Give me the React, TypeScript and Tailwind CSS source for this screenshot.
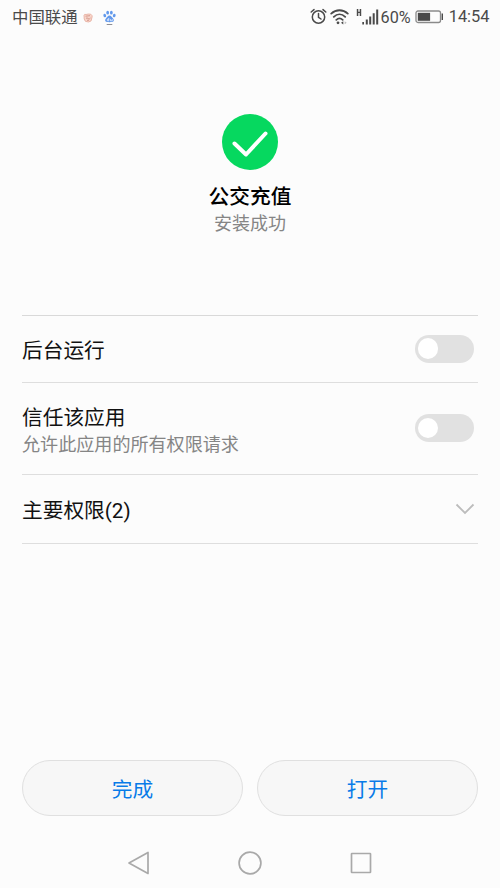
import React from 'react';

function AlarmIcon() {
  return (
    <svg width="17" height="17" viewBox="0 0 17 17" fill="none" stroke="#4a4a4a" strokeWidth="1.5" strokeLinecap="round">
      <circle cx="8.5" cy="9" r="6.2" />
      <path d="M8.5 5.5V9.3L11 11M1.2 4L4 1.6M15.8 4L13 1.6" />
    </svg>
  );
}

function WifiIcon() {
  return (
    <svg width="19" height="16" viewBox="0 0 19 16" fill="none" stroke="#4a4a4a" strokeWidth="1.8" strokeLinecap="round">
      <path d="M1.2 4.6C6 .1 13 .1 17.8 4.6M3.8 7.8C7.2 4.6 11.8 4.6 15.2 7.8M6.3 10.8C8.2 9.1 10.8 9.1 12.7 10.8" />
      <circle cx="8" cy="13.8" r="1.4" fill="#4a4a4a" stroke="none" />
      <path d="M11 13.8l2.300-1.600v3.200z" fill="#4a4a4a" stroke="none" />
      <path d="M16.700 13.800l-2-1.500v3z" fill="#bdbdbd" stroke="none" />
    </svg>
  );
}

function SignalIcon() {
  return (
    <svg width="23" height="16" viewBox="0 0 23 16" fill="#4a4a4a">
      <path d="M.8 0h1.500v2.800h1.400V0h1.500v7H3.700V4.100H2.300V7H.8z" />
      <path d="M6.300 13h1.700v2.500H6.300zM9.800 10.500h2v5h-2zM13.200 7.500h2v8h-2zM16.700 4.200h2v11.300h-2zM20.200 .5h2v15h-2z" />
    </svg>
  );
}

function BatteryIcon() {
  return (
    <svg width="29" height="14" viewBox="0 0 29 14" fill="none">
      <rect x="1" y="1" width="24.500" height="11.500" rx="2" stroke="#8a8a8a" strokeWidth="1.300" />
      <rect x="2.800" y="2.800" width="12.300" height="8" fill="#4a4a4a" />
      <path d="M27.300 3.500v6.500" stroke="#4a4a4a" strokeWidth="1.400" />
    </svg>
  );
}

function NoticeIcon() {
  return (
    <svg width="10" height="10" viewBox="0 0 10 10" fill="none">
      <path d="M1 2.200Q1.500 .8 3 1.500L5.500 1Q8.500 .8 9 2.500Q9.500 4 8.800 5Q9 8.800 5.500 9Q1.500 9.200 1.200 6Z" fill="#f8d5ca" stroke="#e5ab9c" strokeWidth=".8" />
      <path d="M2.500 3.200L7 2.700M3 5.500Q4 4 5 5.500T7.500 5M4 7.300h2" stroke="#cc8c7e" strokeWidth=".8" />
    </svg>
  );
}

function PawIcon() {
  return (
    <svg width="13" height="16" viewBox="0 0 14 16" fill="#6299ec">
      <ellipse cx="1.900" cy="5.300" rx="1.500" ry="2" transform="rotate(-12 1.900 5.300)" />
      <ellipse cx="5" cy="2.300" rx="1.500" ry="2" />
      <ellipse cx="9" cy="2.300" rx="1.500" ry="2" />
      <ellipse cx="12.100" cy="5.300" rx="1.500" ry="2" transform="rotate(12 12.100 5.300)" />
      <path d="M7 5.300C9 5.300 9.200 7 10.700 8.300C12.300 9.800 12 12.300 9.800 12.400C8 12.500 6 12.500 4.200 12.400C2 12.300 1.700 9.800 3.300 8.300C4.800 7 5 5.300 7 5.300Z" />
      <path d="M6.200 8v3H4.900Q4 10.200 4.900 9.300H6.200M8 9.200v1.800h2V9.200" fill="none" stroke="#f5f8ff" strokeWidth=".8" />
      <path d="M4 15h6" stroke="#85858c" strokeWidth="1" />
    </svg>
  );
}

function Toggle() {
  return (
    <button role="switch" aria-checked="false" className="mr-1 flex h-7 w-[59px] shrink-0 items-center rounded-full bg-[#e1e1e1] px-[2.500px]">
      <span className="size-[20.500px] rounded-full bg-white" />
    </button>
  );
}

const pill = 'flex h-14 flex-1 items-center justify-center rounded-full border border-[#e0e0e0] bg-[#f7f7f7] pt-[5px] text-[20.700px] text-[#087be8]';

export default function App() {
  return (
    <div className="flex h-[888px] w-[500px] flex-col overflow-hidden bg-[#fcfcfc] font-['Roboto','Noto_Sans_CJK_SC',sans-serif] text-[#111]">
      <header className="flex h-[34px] shrink-0 items-center pr-[10.500px] pl-3 text-[16.400px] whitespace-nowrap text-[#4a4a4a]">
        <span className="pt-[3px]">中国联通</span>
        <span className="ml-[5px] pt-px"><NoticeIcon /></span>
        <span className="ml-[10px] pt-[2px]"><PawIcon /></span>
        <div className="ml-auto flex items-center">
          <AlarmIcon />
          <span className="ml-[3px]"><WifiIcon /></span>
          <span className="ml-[7px]"><SignalIcon /></span>
          <span className="ml-[2px] pt-[2px] text-[16.200px]">60%</span>
          <span className="ml-[4px]"><BatteryIcon /></span>
          <span className="ml-[5px] pt-px">14:54</span>
        </div>
      </header>

      <section className="flex h-[280.500px] shrink-0 flex-col items-center pt-[79.500px]">
        <svg width="56" height="56" viewBox="0 0 56 56" fill="none">
          <circle cx="28" cy="28" r="28" fill="#06d85f" />
          <path d="M12.500 29.500L24 40.500L43.500 19.500" stroke="white" strokeWidth="4" strokeLinecap="round" strokeLinejoin="round" />
        </svg>
        <h1 className="mt-3 text-[20.700px] leading-[30px] font-medium text-black">公交充值</h1>
        <p className="text-[18px] leading-6 text-[#858585]">安装成功</p>
      </section>

      <main className="mx-[22px] shrink-0 border-t border-[#d9d9d9] text-[20.700px]">
        <div className="flex h-[67px] items-center justify-between border-b border-[#dedede]">
          <span className="pt-[6px]">后台运行</span>
          <Toggle />
        </div>
        <div className="flex h-[92px] items-center justify-between border-b border-[#dedede]">
          <div className="flex flex-col pt-[5px]">
            <span className="leading-7">信任该应用</span>
            <span className="text-[18.080px] leading-[25px] text-[#858585]">允许此应用的所有权限请求</span>
          </div>
          <Toggle />
        </div>
        <div className="flex h-[69px] items-center justify-between border-b border-[#dedede]">
          <span className="pt-[6px]">主要权限(2)</span>
          <svg className="mr-[3px]" width="20" height="12" viewBox="0 0 20 12" fill="none" stroke="#bcbcbc" strokeWidth="1.800">
            <path d="M1.500 1.500L10 10L18.500 1.500" />
          </svg>
        </div>
      </main>

      <div className="mx-[22px] mt-auto flex shrink-0 gap-[14px]">
        <button className={pill}>完成</button>
        <button className={pill}>打开</button>
      </div>

      <nav className="flex h-[72px] shrink-0 items-center justify-center gap-[87px] pt-[22px]">
        <svg width="24" height="24" viewBox="0 0 24 24" fill="none" stroke="#a9a9a9" strokeWidth="1.700" strokeLinejoin="round">
          <path d="M2 12L21 1.500V22.500Z" />
        </svg>
        <svg width="24" height="24" viewBox="0 0 24 24" fill="none" stroke="#a9a9a9" strokeWidth="1.700">
          <circle cx="12" cy="12" r="10.900" />
        </svg>
        <svg width="24" height="24" viewBox="0 0 24 24" fill="none" stroke="#a9a9a9" strokeWidth="1.700" strokeLinejoin="round">
          <rect x="2.500" y="2.500" width="19" height="19" rx=".5" />
        </svg>
      </nav>
    </div>
  );
}
